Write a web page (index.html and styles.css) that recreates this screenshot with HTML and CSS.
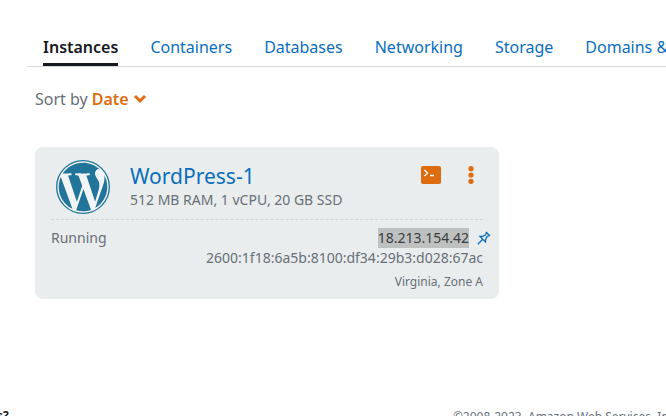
FILE: index.html
```html
<!DOCTYPE html>
<html lang="en">
<head>
<meta charset="utf-8">
<title>Instances</title>
<link rel="stylesheet" href="styles.css">
</head>
<body>
<main class="content">
  <nav class="tabs" aria-label="Resources">
    <a class="tab tab-active" href="#instances" aria-current="page">Instances</a>
    <a class="tab" href="#containers">Containers</a>
    <a class="tab" href="#databases">Databases</a>
    <a class="tab" href="#networking">Networking</a>
    <a class="tab" href="#storage">Storage</a>
    <a class="tab" href="#domains">Domains &amp; DNS</a>
  </nav>
  <div class="sort">
    <span>Sort by</span>
    <button class="sort-button" type="button">Date
      <svg class="chevron" viewBox="0 0 14 10" aria-hidden="true"><path d="M2 2l5 5 5-5"/></svg>
    </button>
  </div>
  <article class="card">
    <header class="card-head">
      <svg class="logo" viewBox="0 0 24 24" aria-hidden="true">
        <circle cx="12" cy="12" r="11.7"/>
        <path d="M21.469 6.825c.84 1.537 1.318 3.3 1.318 5.175 0 3.979-2.156 7.456-5.363 9.325l3.295-9.527c.615-1.54.82-2.771.82-3.864 0-.405-.026-.78-.07-1.11m-7.981.105c.647-.03 1.232-.105 1.232-.105.582-.075.514-.93-.067-.899 0 0-1.755.135-2.88.135-1.064 0-2.85-.15-2.85-.15-.585-.03-.661.855-.075.885 0 0 .54.061 1.125.09l1.68 4.605-2.37 7.08L5.354 6.9c.649-.03 1.234-.1 1.234-.1.585-.075.516-.93-.065-.896 0 0-1.746.138-2.874.138-.2 0-.438-.008-.69-.015C4.911 3.15 8.235 1.215 12 1.215c2.809 0 5.365 1.072 7.286 2.833-.046-.003-.091-.009-.141-.009-1.06 0-1.812.923-1.812 1.914 0 .89.513 1.643 1.06 2.531.411.72.89 1.643.89 2.977 0 .915-.354 1.994-.821 3.479l-1.075 3.585-3.9-11.61.001.014zM12 22.784c-1.059 0-2.081-.153-3.048-.437l3.237-9.406 3.315 9.087c.024.053.05.101.078.149-1.12.393-2.325.609-3.582.609M1.211 12c0-1.564.336-3.05.935-4.39L7.29 21.709C3.694 19.96 1.212 16.271 1.211 12z"/>
      </svg>
      <div class="summary">
        <h2 class="name"><a href="#wordpress-1">WordPress-1</a></h2>
        <p class="specs">512 MB RAM, 1 vCPU, 20 GB SSD</p>
      </div>
      <div class="actions">
        <button class="icon-button" type="button" aria-label="Connect">
          <svg class="terminal" viewBox="0 0 20 18" aria-hidden="true"><rect width="20" height="18" rx="2"/><path d="M3.5 4l3 3-3 3M9 9.5h4"/></svg>
        </button>
        <button class="icon-button" type="button" aria-label="Manage">
          <svg class="dots" viewBox="0 0 6 18" aria-hidden="true"><circle cx="3" cy="2.700" r="2.600"/><circle cx="3" cy="9" r="2.600"/><circle cx="3" cy="15.300" r="2.600"/></svg>
        </button>
      </div>
    </header>
    <div class="card-body">
      <span>Running</span>
      <div class="address">
        <mark class="ip">18.213.154.42</mark>
        <svg class="pin" viewBox="0 0 14 14" aria-hidden="true"><path d="M9 1l4 4M9.500 1.500L8.500 4 5 5.500 3 5.500 8.500 11 8.500 9 10 5.500 12.500 4.500M5.500 8.500L.8 13.200"/></svg>
      </div>
    </div>
    <p class="ipv6">2600:1f18:6a5b:8100:df34:29b3:d028:67ac</p>
    <p class="zone">Virginia, Zone A</p>
  </article>
</main>
<footer class="footer">
  <strong class="question">s?</strong>
  <small class="copyright">©2008-2023, Amazon Web Services, Inc.</small>
</footer>
</body>
</html>
```
FILE: styles.css
```css
* { box-sizing: border-box; }
html, body { height: 100%; }
body {
  margin: 0;
  overflow: hidden;
  background: #fff;
  color: #687078;
  font: 14px/20px "Noto Sans", "Open Sans", sans-serif;
}
a { color: #0a6ebd; text-decoration: none; }
h2, p { margin: 0; }
button {
  padding: 0;
  border: 0;
  background: none;
  font: inherit;
  cursor: pointer;
}
svg { display: block; flex: none; }
.content { padding-top: 36px; }
.tabs {
  display: flex;
  gap: 32px;
  margin-left: 27px;
  padding-left: 16px;
  border-bottom: 1px solid #d5d7d9;
  overflow: hidden;
}
.tab {
  flex: none;
  padding-bottom: 5px;
  border-bottom: 3px solid transparent;
  font-size: 16px;
  line-height: 22px;
}
.tab-active {
  border-color: #16191f;
  color: #16191f;
  font-weight: 600;
}
.sort {
  display: flex;
  gap: 4px;
  margin: 22px 35px 0;
  font-size: 16px;
}
.sort-button {
  display: flex;
  align-items: center;
  gap: 4px;
  color: #dd6b10;
  font-weight: 600;
}
.chevron {
  width: 14px;
  height: 10px;
  fill: none;
  stroke: currentColor;
  stroke-width: 3;
}
.card {
  max-width: 464px;
  margin: 38px 35px 0;
  padding: 13px 16px 7px;
  border-radius: 8px;
  background: #e9eded;
}
.card-head {
  display: flex;
  padding: 0 9px 5px 5px;
  border-bottom: 1px dashed #d0d5d7;
}
.logo {
  width: 54px;
  height: 54px;
  fill: #21759b;
}
.logo circle {
  fill: #f1f5f6;
  stroke: #21759b;
  stroke-width: .6;
}
.summary {
  flex: 1;
  padding: 2px 0 0 20px;
}
.name {
  font-size: 21px;
  font-weight: 400;
  line-height: 28px;
}
.specs { font-size: 14px; }
.actions {
  display: flex;
  gap: 27px;
  align-self: flex-start;
  padding-top: 6px;
}
.terminal {
  width: 20px;
  height: 18px;
  fill: #dd6b10;
}
.terminal path {
  fill: none;
  stroke: #fff;
  stroke-width: 1.3;
}
.dots {
  width: 6px;
  height: 18px;
  fill: #dd6b10;
}
.card-body {
  display: flex;
  justify-content: space-between;
  padding-top: 8px;
}
.address {
  display: flex;
  align-items: center;
  gap: 8px;
  margin-right: -8px;
}
.ip {
  background: #bfc1c1;
  color: #3a3d40;
}
.pin {
  width: 14px;
  height: 14px;
  fill: none;
  stroke: #0a6ebd;
  stroke-width: 1.3;
}
.ipv6 { text-align: right; }
.zone {
  padding-top: 4px;
  text-align: right;
  font-size: 12px;
}
.footer {
  display: grid;
  grid-template-columns: 68% 1fr;
  margin-top: 108px;
  white-space: nowrap;
  font-size: 12px;
}
.question {
  margin-left: -3px;
  color: #16191f;
  line-height: 18px;
}
.copyright { font-size: 12px; }
```
